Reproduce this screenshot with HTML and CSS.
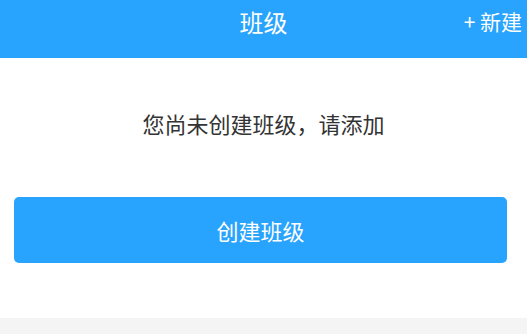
FILE: index.html
```html
<!DOCTYPE html>
<html lang="zh-CN">
<head>
<meta charset="utf-8">
<link rel="stylesheet" href="styles.css">
</head>
<body>
<header class="topbar">
  <div class="topbar-side"></div>
  <div class="topbar-title">班级</div>
  <div class="topbar-side topbar-action">+ 新建</div>
</header>
<main class="content">
  <p class="empty-text">您尚未创建班级，请添加</p>
  <button class="create-btn">创建班级</button>
</main>
<footer class="bottom"></footer>
</body>
</html>
```
FILE: styles.css
```css
html, body {
  margin: 0;
  padding: 0;
  height: 100%;
}
body {
  font-family: "Noto Sans CJK SC", "Noto Sans", sans-serif;
  background: #f4f4f4;
  display: flex;
  flex-direction: column;
}
.topbar {
  height: 58px;
  background: #28a3fe;
  color: #ffffff;
  display: grid;
  grid-template-columns: 1fr auto 1fr;
  align-items: start;
  padding-top: 5px;
  box-sizing: border-box;
}
.topbar-title {
  font-size: 24px;
  line-height: 34px;
}
.topbar-action {
  justify-self: end;
  font-size: 21px;
  line-height: 32px;
  padding-right: 5px;
}
.content {
  background: #ffffff;
  height: 260px;
  display: flex;
  flex-direction: column;
  align-items: center;
}
.empty-text {
  margin: 52px 0 0;
  font-size: 22px;
  line-height: 26px;
  color: #333333;
}
.create-btn {
  align-self: flex-start;
  margin: 61px 0 0 14px;
  width: 493px;
  height: 66px;
  border: none;
  border-radius: 5px;
  background: #28a3fe;
  color: #ffffff;
  font-family: inherit;
  font-size: 22px;
}
.bottom {
  flex: 1;
}
```
